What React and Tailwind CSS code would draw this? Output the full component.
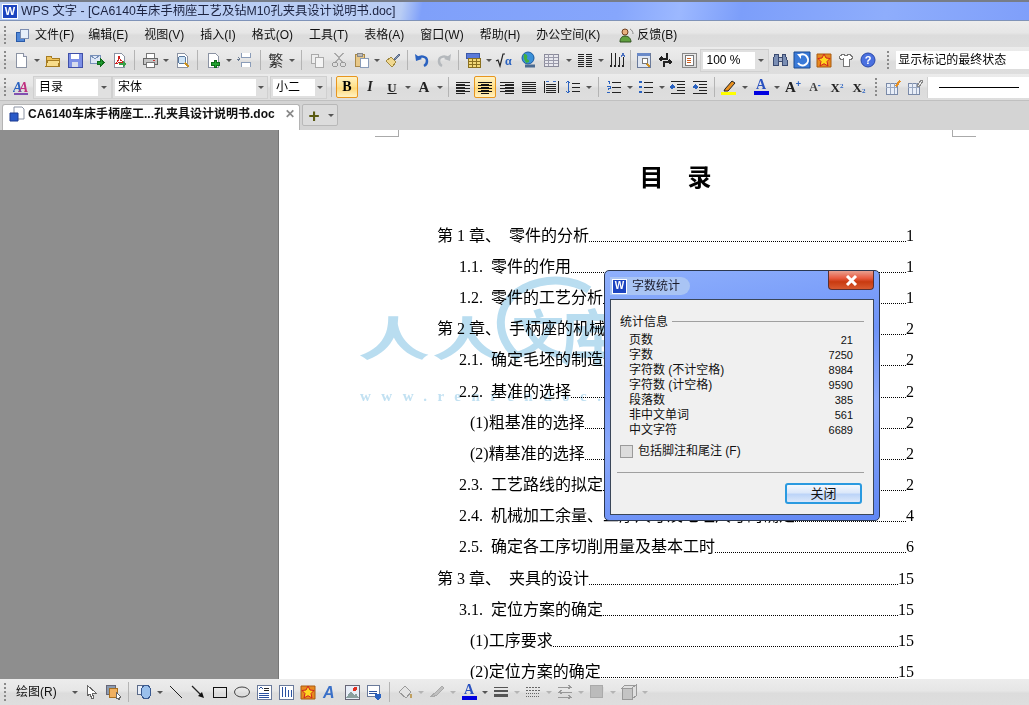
import { Fragment } from 'react'

const ui = 'font-["Liberation_Sans","Noto_Sans_CJK_SC",sans-serif]'
const doc = 'font-["Liberation_Serif","Noto_Sans_CJK_SC",serif]'

function S({ children, vb = '0 0 16 16', size = 16 }) {
  return <svg width={size} height={size} viewBox={vb} className="block" shapeRendering="crispEdges">{children}</svg>
}

function Page({ fill = '#fff' }) {
  return <path d="M3 1h7l3 3v11H3z" fill={fill} stroke="#8b93a3" />
}

const lines = (ys, x1, x2, c = '#222') => ys.map((y) => <path key={y} d={`M${x1} ${y}H${x2}`} stroke={c} />)

const icons = {
  app: <S><path d="M2 5h8v9H2z" fill="#4f87d8" stroke="#2a5aa8" /><path d="M6 2h8v9H6z" fill="#e6eefa" stroke="#7c8db0" /></S>,
  newdoc: <S><Page /><path d="M10 1v3h3" fill="#dde" stroke="#8b93a3" /></S>,
  open: <S><path d="M1 4h5l1 2h7v8H1z" fill="#eec35c" stroke="#a67c22" /><path d="M3 8h12l-2 6H1z" fill="#f8dc8a" stroke="#a67c22" /></S>,
  save: <S><path d="M1 1h14v14H1z" fill="#7c8fe6" stroke="#4050a8" /><path d="M4 2h8v5H4z" fill="#fff" /><path d="M5 10h6v5H5z" fill="#d8dcec" /></S>,
  mail: <S><path d="M1 3h10v8H1z" fill="#dfe8f6" stroke="#7890b8" /><path d="M1 3l5 4 5-4" fill="none" stroke="#7890b8" /><path d="M8 9h3V6l4 4.5-4 4.5v-3H8z" fill="#1e9a2e" stroke="#0f6a1a" /></S>,
  pdf: <S><Page /><path d="M4 12c3-2 4-5 4-8 0 3 2 5 5 6-3 0-6 1-9 2z" fill="none" stroke="#d02020" /><path d="M8 11h4V9l3 3-3 3v-2H8z" fill="#38a048" /></S>,
  print: <S><path d="M4 1h8v5H4z" fill="#fff" stroke="#777" /><path d="M1 6h14v6H1z" fill="#c4c4c4" stroke="#666" /><path d="M4 10h8v5H4z" fill="#fff" stroke="#777" /><path d="M11 8h2v1h-2z" fill="#d03030" /></S>,
  preview: <S><Page /><circle cx="8" cy="8" r="4" fill="#cfe4f6" stroke="#5a7aa0" /><path d="M11 11l4 4" stroke="#c89020" strokeWidth="2" /></S>,
  addpage: <S><Page /><path d="M9 8h2v2h3v3h-3v2H9v-2H6v-3h3z" fill="#20a030" stroke="#0c6a18" /></S>,
  pagebreak: <S><path d="M4 1v4h9V1M4 15v-5h9v5" fill="#fff" stroke="#8a9cb8" /><path d="M0 7h3M1 5l2 2-2 2" fill="none" stroke="#6a7a90" /></S>,
  fan: <span className={`text-[15px] leading-none text-[#333] ${ui}`}>繁</span>,
  copy: <S><path d="M2 2h7v9H2z" fill="#eee" stroke="#aaa" /><path d="M6 5h8v10H6z" fill="#f4f4f4" stroke="#aaa" /></S>,
  cut: <S><path d="M4 1l7 9M12 1l-7 9" stroke="#aaa" strokeWidth="1.5" /><circle cx="4" cy="12.5" r="2.5" fill="none" stroke="#999" /><circle cx="12" cy="12.5" r="2.5" fill="none" stroke="#999" /></S>,
  paste: <S><path d="M2 2h9v12H2z" fill="#e8c888" stroke="#a88848" /><path d="M4 1h5v3H4z" fill="#bbb" stroke="#888" /><path d="M7 6h8v9H7z" fill="#fff" stroke="#8a9cb8" /></S>,
  brush: <S><path d="M1 9l5-4 5 5-4 5z" fill="#f0d890" stroke="#a08840" /><path d="M9 7l5-5 1 1-5 5z" fill="#8a9cb8" stroke="#5a6a88" /></S>,
  undo: <svg width="16" height="16" viewBox="0 0 16 16" className="block"><path d="M3 7c3-4 10-3 10 2 0 2-1 4-3 5" fill="none" stroke="#2a62c0" strokeWidth="2.5" /><path d="M1 2l1 7 6-2z" fill="#2a62c0" /></svg>,
  redo: <svg width="16" height="16" viewBox="0 0 16 16" className="block"><path d="M13 7C10 3 3 4 3 9c0 2 1 4 3 5" fill="none" stroke="#b4b8bc" strokeWidth="2.5" /><path d="M15 2l-1 7-6-2z" fill="#b4b8bc" /></svg>,
  tablecal: <S><path d="M1 1h13v5H1z" fill="#5a7ad8" stroke="#3a58a8" /><path d="M3 6h12v9H3z" fill="#f2d878" stroke="#8a7020" /><path d="M7 6v9M11 6v9M3 9h12M3 12h12" stroke="#8a7020" /></S>,
  sqrt: <svg width="20" height="16" viewBox="0 0 20 16" className="block"><path d="M1 9l2-1 2 6 3-12h2" fill="none" stroke="#222" strokeWidth="1.2" /><text x="10" y="13" fontSize="12" fontWeight="700" fontFamily="Liberation Serif" fill="#2a62c0">α</text></svg>,
  globe: <svg width="18" height="18" viewBox="0 0 18 18" className="block"><circle cx="8" cy="7" r="6" fill="#3a90d8" stroke="#1a5aa0" /><path d="M4 3c3 0 4 2 3 4s3 1 2 4l-3 1C5 9 3 8 4 3z" fill="#40b040" /><path d="M5 15h10" stroke="#4a6a90" strokeWidth="3" /></svg>,
  table: <S><path d="M1 2h14v12H1z" fill="#e8e8ee" stroke="#8a8a9a" /><path d="M1 5h14M1 8.500h14M1 11.500h14M5.500 2v12M10.500 2v12" stroke="#9a9aaa" /></S>,
  cols: <S>{lines([2, 4, 6, 8, 10, 12, 14], 1, 7)}{lines([2, 4, 6, 8, 10, 12, 14], 9, 15)}</S>,
  bars: <S><path d="M2 1v13M6 1v13M10 5v9M14 5v9" stroke="#222" /><path d="M1 14h2M5 14h2M9 14h2M13 14h2" stroke="#222" strokeWidth="2" /><path d="M12 5l2-4 2 4M12.500 3h3" fill="none" stroke="#4a70c0" /></S>,
  review: <S><path d="M1 1h13v14H1z" fill="#dfe6f2" stroke="#6a7a9a" /><path d="M1 1h13v3H1z" fill="#6a8ac8" /><circle cx="9" cy="9" r="3" fill="#fff" stroke="#777" /><path d="M11 12l3 3" stroke="#d09020" strokeWidth="2" /></S>,
  arrows: <S><path d="M10 1v6H5M5 5L3 7l2 2M7 15v-5h5M12 8l2 2-2 2" fill="none" stroke="#222" strokeWidth="1.5" /></S>,
  frame: <S><path d="M1 1h14v14H1z" fill="none" stroke="#888" /><path d="M4 3h8v10H4z" fill="#fff" stroke="#777" /><path d="M6 6h4M6 8h4M6 10h4" stroke="#d06020" /></S>,
  binoc: <S><path d="M1 8l2-6h3v11H1zM15 8l-2-6h-3v11h5z" fill="#7a8eb4" stroke="#3a4a70" /><path d="M6 5h4v4H6z" fill="#aab6d0" stroke="#3a4a70" /></S>,
  blue: <svg width="18" height="18" viewBox="0 0 18 18" className="block"><path d="M1 1h16v16H1z" fill="#3a7ad8" stroke="#1a4a90" /><path d="M7 4a5.500 5.500 0 1 1-2 8" fill="none" stroke="#fff" strokeWidth="2" /><path d="M4 3h4v5z" fill="#fff" /></svg>,
  star: <svg width="16" height="16" viewBox="0 0 16 16" className="block"><path d="M1 2h14v13H1z" fill="#e88a20" stroke="#a85a10" /><path d="M8 2l2 4 4 .5-3 3 1 4.500-4-2.300-4 2.300 1-4.500-3-3 4-.5z" fill="#ffd820" stroke="#d02020" /></svg>,
  shirt: <S><path d="M5 2L1 5l2 3 2-1v7h6V7l2 1 2-3-4-3-3 2z" fill="#fff" stroke="#777" /></S>,
  help: <svg width="16" height="16" viewBox="0 0 16 16" className="block"><circle cx="8" cy="8" r="7" fill="#4a70e0" stroke="#2a48a8" /><text x="8" y="12" textAnchor="middle" fontSize="11" fontWeight="700" fontFamily="Liberation Sans" fill="#fff">?</text></svg>,
  style: <svg width="16" height="16" viewBox="0 0 16 16" className="block"><text x="0" y="13" fontSize="14" fontWeight="700" fontStyle="italic" fontFamily="Liberation Serif" fill="#2a62c0">A</text><text x="6" y="13" fontSize="14" fontWeight="700" fontStyle="italic" fontFamily="Liberation Serif" fill="#c03080">A</text><path d="M1 15h14" stroke="#6020a0" strokeWidth="1.500" /></svg>,
  b: <span className={`text-[14px] font-bold leading-none text-black ${doc}`}>B</span>,
  i: <span className={`text-[14px] italic font-bold leading-none text-[#222] ${doc}`}>I</span>,
  u: <span className={`text-[13px] font-bold underline leading-none text-[#222] ${doc}`}>U</span>,
  aa: <span className={`text-[15px] font-bold leading-none text-[#222] ${doc}`}>A</span>,
  left: <S>{lines([3, 6, 9, 12], 1, 15)}{lines([5, 8, 11, 14], 1, 10)}</S>,
  center: <S>{lines([3, 6, 9, 12], 1, 15, '#111')}{lines([5, 8, 11, 14], 4, 12, '#111')}</S>,
  right: <S>{lines([3, 6, 9, 12], 1, 15)}{lines([5, 8, 11, 14], 6, 15)}</S>,
  just: <S>{lines([3, 5, 7, 9, 11, 13], 1, 15)}</S>,
  dist: <S><path d="M1 2v12M15 2v12" stroke="#222" />{lines([5, 7, 9, 11, 13], 3, 13)}<path d="M3 2h3M10 2h3" stroke="#3a70c8" /></S>,
  spacing: <S><path d="M3 2v12M1 4l2-2 2 2M1 12l2 2 2-2" fill="none" stroke="#2a62c0" />{lines([4, 8, 12], 7, 15)}</S>,
  numlist: <S>{lines([3, 8, 13], 6, 15)}<path d="M2 2h1v3M1 7h3v2H2v2M1 13h3" fill="none" stroke="#2a62c0" /></S>,
  bullets: <S>{lines([3, 8, 13], 6, 15)}<path d="M1 2h3v2H1zM1 7h3v2H1zM1 12h3v2H1z" fill="#2a62c0" /></S>,
  outdent: <S>{lines([2, 14], 1, 15)}{lines([5, 8, 11], 7, 15)}<path d="M5 8H1M3 6L1 8l2 2" fill="none" stroke="#2a62c0" strokeWidth="1.500" /></S>,
  indent: <S>{lines([2, 14], 1, 15)}{lines([5, 8, 11], 7, 15)}<path d="M1 8h4M3 6l2 2-2 2" fill="none" stroke="#2a62c0" strokeWidth="1.500" /></S>,
  hl: <svg width="16" height="16" viewBox="0 0 16 16" className="block"><path d="M4 10l7-8 3 2-7 8H3z" fill="#e89020" stroke="#222" /><path d="M0 13h15v3H0z" fill="#ffff00" /></svg>,
  color: <div className="flex flex-col items-center w-[15px]"><span className={`text-[14px] font-bold leading-[12px] text-[#2a52c0] ${doc}`}>A</span><div className="w-[15px] h-[4px] bg-[#0000e0]" /></div>,
  aplus: <span className={`relative text-[15px] font-bold leading-none text-[#222] ${doc}`}>A<span className={`text-[9px] text-[#2a62c0] align-top ${ui}`}>+</span></span>,
  aminus: <span className={`text-[12px] font-bold leading-none text-[#444] ${doc}`}>A<span className={`text-[9px] text-[#2a62c0] align-top ${ui}`}>-</span></span>,
  sup: <span className={`text-[13px] font-bold leading-none text-[#222] ${doc}`}>X<sup className="text-[7px] text-[#2a62c0]">2</sup></span>,
  sub: <span className={`text-[13px] font-bold leading-none text-[#222] ${doc}`}>X<sub className="text-[7px] text-[#2a62c0]">2</sub></span>,
  tpen: <S><path d="M1 4h11v11H1z" fill="#e8eef8" stroke="#7a8aa8" /><path d="M1 8h11M5 4v11M9 4v11" stroke="#9aa8c0" /><path d="M10 7l4-6 2 1-4 6z" fill="#e89020" /></S>,
  terase: <S><path d="M1 4h11v11H1z" fill="#e8eef8" stroke="#7a8aa8" /><path d="M1 8h11M5 4v11M9 4v11" stroke="#9aa8c0" /><path d="M10 7l4-6 2 1-4 6z" fill="#eee" stroke="#888" /></S>,
  cursor: <S><path d="M4 1v11l3-2 2 5 2-1-2-5h4z" fill="#fff" stroke="#666" /></S>,
  objs: <S><path d="M1 1h9v9H1z" fill="#8a9ab0" stroke="#667" /><path d="M4 4h8v9H4z" fill="#f0b060" stroke="#a87020" /><path d="M11 8v7l2-1 1 2 1-1-1-2h2z" fill="#fff" stroke="#666" /></S>,
  shapes: <S><path d="M1 1h10v9H1z" fill="#e8eef8" stroke="#5a6a88" /><ellipse cx="10" cy="8" rx="5" ry="7" fill="#9ac0ec" stroke="#3a5a90" /></S>,
  line: <S><path d="M2 2l12 12" stroke="#222" shapeRendering="auto" /></S>,
  arrow: <svg width="16" height="16" viewBox="0 0 16 16" className="block"><path d="M2 2l9 9" stroke="#222" strokeWidth="1.200" /><path d="M14 14l-6-2 4-4z" fill="#111" /></svg>,
  rect: <S><path d="M1.500 3.500h13v10h-13z" fill="none" stroke="#111" /></S>,
  ellipse: <svg width="16" height="16" viewBox="0 0 16 16" className="block"><ellipse cx="8" cy="8" rx="7.500" ry="5" fill="none" stroke="#444" /></svg>,
  textbox: <S><path d="M1 1h14v14H1z" fill="#fff" stroke="#6a7a9a" /><path d="M3 5l2-2 2 2" fill="none" stroke="#2a52a0" />{lines([4, 6], 8, 13)}{lines([9, 11, 13], 3, 13, '#2a52a0')}</S>,
  vtextbox: <S><path d="M1 1h14v14H1z" fill="#fff" stroke="#6a7a9a" /><path d="M4 3v10M7 3v10M10 6v7M13 6v7" stroke="#2a52a0" /></S>,
  wordart: <svg width="16" height="18" viewBox="0 0 16 18" className="block"><text x="1" y="15" fontSize="16" fontWeight="700" fontStyle="italic" fontFamily="Liberation Sans" fill="#3a70c8">A</text></svg>,
  image: <S><path d="M1 1h14v14H1z" fill="#e8eef8" stroke="#667" /><path d="M2 14l5-7 3 4 2-2 3 5z" fill="#8aa0a0" /><circle cx="11" cy="5" r="2" fill="#e03020" /></S>,
  diagram: <S><path d="M1 1h12v11H1z" fill="#fff" stroke="#6a7a9a" />{lines([7, 9], 3, 11, '#2a52a0')}<path d="M9 10h6v4l-3 2-3-2z" fill="#2a62c0" /></S>,
  fill: <S><path d="M2 8l6-6 6 6-5 6z" fill="#e4e4e4" stroke="#999" /><path d="M14 10v4" stroke="#c0a060" strokeWidth="2" /></S>,
  pen: <S><path d="M1 13c2-1 3-3 5-4l7-7 2 2-7 7c-2 1-4 2-7 2z" fill="#c0c0c0" stroke="#aaa" /></S>,
  weight: <S><path d="M1 3h14" stroke="#555" /><path d="M1 6.500h14" stroke="#555" strokeWidth="2" /><path d="M1 11h14" stroke="#555" strokeWidth="3" /></S>,
  dash: <S><path d="M1 3h14M1 6h14" stroke="#666" strokeDasharray="2 1" /><path d="M1 9h14M1 12h14" stroke="#666" strokeDasharray="1 1" /></S>,
  arrowstyle: <S><path d="M1 3h14M11 1l3 2-3 2M1 8h14M5 6L2 8l3 2M1 13h14M11 11l3 2-3 2" fill="none" stroke="#999" /></S>,
  shadow: <S><path d="M3 3h12v12H3z" fill="#ddd" /><path d="M1 1h12v12H1z" fill="#bbb" stroke="#aaa" /></S>,
  cube: <S><path d="M1 4h10v11H1z" fill="#c4c4c4" stroke="#999" /><path d="M1 4l3-3h11l-4 3zM11 4l4-3v11l-4 3z" fill="#e0e0e0" stroke="#999" /></S>,
}

const Grip = () => (
  <div className="w-[2px] h-[18px] mx-[3px] border-l-2 border-dotted border-[#8a8a8a]" />
)
const Sep = ({ m = 'mx-[4px]' }) => <div className={`w-px h-[20px] ${m} bg-[#b4b4b4]`} />
const Drop = ({ w = 'w-[10px]', dim }) => (
  <div className={`${w} flex justify-center`}>
    <div className={`w-0 h-0 border-x-[3px] border-x-transparent border-t-[3px] ${dim ? 'border-t-[#b4b4b4]' : 'border-t-[#555]'}`} />
  </div>
)
const Btn = ({ name, on, w = 'w-[22px]' }) => (
  <div
    className={`${w} h-[22px] flex items-center justify-center rounded-[2px] ${
      on ? 'border border-[#e8961e] bg-[linear-gradient(#fff2c4,#ffe08a_50%,#ffd878_55%,#fff2c4)]' : ''
    }`}
  >
    {icons[name]}
  </div>
)

// 'name' = button, 'v' = dropdown arrow, '|' = separator, 'n'/'m' = tighter separators, '_' = 2px gap
function Items({ list }) {
  return list.map((it, i) => {
    if (it === 'v') return <Drop key={i} />
    if (it === 'd') return <Drop key={i} dim />
    if (it === '|') return <Sep key={i} />
    if (it === 'n') return <Sep key={i} m="mx-[3px]" />
    if (it === 'm') return <Sep key={i} m="mx-[2px]" />
    if (it === '_') return <div key={i} className="w-[2px]" />
    return <Btn key={i} name={it} />
  })
}

function Combo({ value, w, inner, indent = 'pl-[3px]' }) {
  return (
    <div className={`${w} h-[23px] flex items-center border border-[#d0d0d0] bg-[#e0e0e0] p-[2px]`}>
      <div className={`${inner} h-[17px] bg-white ${indent} text-[12px] leading-[17px] text-black whitespace-nowrap overflow-hidden`}>{value}</div>
      <Drop w="flex-1" />
    </div>
  )
}

const barBg = 'bg-[linear-gradient(#ececec,#e6e6e6_45%,#dcdcdc_55%,#dedede)]'

function TitleBar() {
  return (
    <div className="h-[21px] flex items-center bg-[linear-gradient(100deg,#b9cdf4_0,#b9cdf4_39%,#7fa0fa_41%,#86a6fc_60%,#9cb8ff_66%,#7c9efa_72%,#8eadfc_86%,#7f9ffa_100%)] border-t-2 border-[#777d88] border-b border-b-[#7f93b8]">
      <div className="w-[16px] h-[15px] ml-[2px] mr-[3px] flex items-center justify-center bg-[#1c44c0] border border-[#fff] text-[11px] font-bold leading-none text-white">W</div>
      <span className="text-[12.300px] text-[#1c2340] whitespace-pre">WPS 文字 - [CA6140车床手柄座工艺及钻M10孔夹具设计说明书.doc]</span>
    </div>
  )
}

const menus = ['文件(F)', '编辑(E)', '视图(V)', '插入(I)', '格式(O)', '工具(T)', '表格(A)', '窗口(W)', '帮助(H)', '办公空间(K)']

function MenuBar() {
  return (
    <div className={`h-[26px] pt-[2px] flex items-center ${barBg}`}>
      <div className="w-[9px] flex justify-center"><Grip /></div>
      <div className="w-[26px] flex justify-center">{icons.app}</div>
      {menus.map((m, i) => (
        <span key={m} className={`${i === 0 ? 'mr-[14px]' : 'mr-[16px]'} text-[12px] text-[#111] whitespace-nowrap`}>{m}</span>
      ))}
      <div className="ml-[3px] mr-[2px] w-[16px] h-[16px] flex items-center justify-center">
        <svg width="16" height="16" viewBox="0 0 16 16"><circle cx="6" cy="5" r="3" fill="#e8b080" stroke="#704020" /><path d="M1 15c0-4 2-6 5-6s6 2 6 6z" fill="#60a040" stroke="#305020" /><path d="M11 2c2 1 3 3 3 5" fill="none" stroke="#888" /></svg>
      </div>
      <span className="text-[12px] text-[#111]">反馈(B)</span>
    </div>
  )
}

function Toolbar1() {
  return (
    <div className={`h-[27px] pb-[1px] flex items-center ${barBg}`}>
      <div className="w-[10px] flex justify-center"><Grip /></div>
      <Items list={['newdoc', 'v', 'open', 'save', 'mail', 'pdf', '|', 'print', 'v', 'preview', '|', 'addpage', 'v', 'pagebreak', '|', 'fan', 'v', '|', 'copy', 'cut', 'paste', 'v', 'brush', 'n', 'undo', 'redo', 'n', 'tablecal', 'v', 'sqrt', '_', 'globe', 'table', '_', 'v', 'cols', 'v', 'bars', 'm', 'review', 'arrows', '_', 'frame']} />
      <Combo value="100 %" w="w-[69px]" inner="w-[52px]" />
      <Items list={['binoc', 'blue', 'star', 'shirt', 'help']} />
      <div className="w-[17px] flex justify-center"><Grip /></div>
      <div className="w-[133px] h-[18px] bg-white pl-[2px] text-[12px] leading-[18px] text-black">显示标记的最终状态</div>
    </div>
  )
}

function Toolbar2() {
  return (
    <div className={`h-[26px] flex items-center ${barBg}`}>
      <div className="w-[10px] flex justify-center"><Grip /></div>
      <Btn name="style" />
      <div className="ml-[1px]"><Combo value="目录" w="w-[79px]" inner="w-[62px]" /></div>
      <Combo value="宋体" w="w-[156px]" inner="w-[141px]" />
      <div className="ml-[2px]"><Combo value="小二" w="w-[57px]" inner="w-[42px]" /></div>
      <Sep />
      <Btn name="b" on />
      <div className="w-[1px]" />
      <Items list={['i', 'u', 'v', 'aa', 'v', 'n', 'left']} />
      <Btn name="center" on />
      <Items list={['right', 'just', 'dist', 'spacing', 'v', '|', 'numlist', 'v', 'bullets', 'v', 'outdent', 'indent', 'n', 'hl', 'v', 'color', 'v', 'aplus', 'aminus', 'sup', 'sub']} />
      <div className="w-[12px] flex justify-center"><Grip /></div>
      <Btn name="tpen" />
      <Btn name="terase" />
      <div className="ml-[1px] flex-1 h-[21px] bg-white flex items-center pl-[11px] border-l border-[#d0d0d0]">
        <div className="w-[80px] h-px bg-black" />
      </div>
    </div>
  )
}

function TabBar() {
  return (
    <div className="h-[30px] flex items-end bg-[#d4d4d4] border-t border-[#c0c0c0] pl-[2px]">
      <div className="w-[298px] h-[26px] flex items-center bg-white border border-b-0 border-[#b4b4b4] rounded-t-[3px] pl-[6px] pb-[8px]">
        <svg width="16" height="16" viewBox="0 0 16 16" className="mr-[3px] shrink-0"><path d="M5 1h8l2 2v10H5z" fill="#fff" stroke="#8b93a3" /><path d="M1 7h8v8H1z" fill="#2a5ac8" stroke="#1c3a90" /></svg>
        <span className="text-[12px] font-bold text-[#111] whitespace-nowrap">CA6140车床手柄座工...孔夹具设计说明书.doc</span>
        <span className="ml-auto mr-[4px] text-[12px] font-bold leading-none text-[#888]">✕</span>
      </div>
      <div className="ml-[2px] mb-[4px] w-[36px] h-[22px] flex items-center border border-[#b8b8b8] rounded-[2px] bg-[#dcdcdc]">
        <span className="w-[22px] text-center text-[19px] font-bold leading-none text-[#5a5a10]">+</span>
        <Drop w="flex-1" />
      </div>
    </div>
  )
}

const toc = [
  ['第 1 章、  零件的分析', '1', 0],
  ['1.1.  零件的作用', '1', 1],
  ['1.2.  零件的工艺分析', '1', 1],
  ['第 2 章、  手柄座的机械加工工艺规程设计', '2', 0],
  ['2.1.  确定毛坯的制造形式', '2', 1],
  ['2.2.  基准的选择', '2', 1],
  ['(1)粗基准的选择', '2', 2],
  ['(2)精基准的选择', '2', 2],
  ['2.3.  工艺路线的拟定', '2', 1],
  ['2.4.  机械加工余量、工序尺寸及毛坯尺寸的确定', '4', 1],
  ['2.5.  确定各工序切削用量及基本工时', '6', 1],
  ['第 3 章、  夹具的设计', '15', 0],
  ['3.1.  定位方案的确定', '15', 1],
  ['(1)工序要求', '15', 2],
  ['(2)定位方案的确定', '15', 2],
]
const indents = ['', 'pl-[22px]', 'pl-[33px]']

function Document() {
  return (
    <div className={`relative flex-1 min-h-0 flex overflow-hidden ${doc}`}>
      <div className="w-[279px] bg-[#8e8e8e] border-r border-[#777]" />
      <div className="flex-1 bg-white relative">
        {/* page corner marks */}
        <div className="flex justify-between pl-[96px] pr-[53px]">
          <div className="w-[24px] h-[7px] border-r border-b border-[#aaa]" />
          <div className="w-[24px] h-[7px] border-l border-b border-[#aaa]" />
        </div>
        <div className="pl-[158px] w-[635px]">
          <div className="h-[63px] pt-[21px] text-center text-[24px] font-bold leading-[40px] text-black whitespace-pre">目    录</div>
          <div className="pt-[20px]">
            {toc.map(([label, page, lvl]) => (
              <div key={label} className={`h-[31.2px] flex items-center text-[16px] text-black ${indents[lvl]}`}>
                <span className="whitespace-pre">{label}</span>
                <span className="flex-1 h-[12px] border-b border-dotted border-black" />
                <span>{page}</span>
              </div>
            ))}
          </div>
        </div>
      </div>
      <Watermark />
    </div>
  )
}

function Watermark() {
  return (
    <div className="absolute left-[358px] top-[166px] w-[290px] h-[125px] pointer-events-none mix-blend-multiply">
      <div className="flex items-center h-[88px] text-[72px] leading-none font-bold text-[#b9ddf0]">
        <span className="scale-y-[0.65] mr-[2px]">人</span>
        <span className="scale-y-[0.65]">人</span>
        <span className="text-[52px] ml-[8px] mt-[-6px]">文</span>
        <span className="text-[60px] ml-[-4px]">库</span>
      </div>
      <svg width="120" height="100" viewBox="0 0 120 100" className="absolute left-[136px] top-[-28px]">
        <path d="M25 90C0 70 0 35 30 20c25-12 50-8 65 2" fill="none" stroke="#b9ddf0" strokeWidth="8" />
      </svg>
      <div className="pl-[2px] text-[15px] font-bold leading-[24px] text-[#c2e1f2] tracking-[10.500px] whitespace-nowrap">www.renrendoc.com</div>
    </div>
  )
}

const stats = [
  ['页数', '21'],
  ['字数', '7250'],
  ['字符数 (不计空格)', '8984'],
  ['字符数 (计空格)', '9590'],
  ['段落数', '385'],
  ['非中文单词', '561'],
  ['中文字符', '6689'],
]

function WordCount() {
  return (
    <div className="absolute left-[604px] top-[270px] w-[276px] h-[251px] flex flex-col rounded-[5px] border border-[#2c3850] bg-[linear-gradient(170deg,#8fb0fc,#6f94f8_35%,#8aa9fb_60%,#5f86f4)] px-[5px] pb-[5px]">
      <div className="h-[28px] flex items-start shrink-0">
        <div className="mt-[6px] flex items-center h-[18px] w-[80px] rounded-r-full bg-[#a9c4f4]">
          <div className="w-[15px] h-[15px] ml-[2px] mr-[5px] flex items-center justify-center bg-[#1c44c0] border border-white text-[10px] font-bold leading-none text-white">W</div>
          <span className="text-[12px] text-[#1a1a2a] whitespace-nowrap">字数统计</span>
        </div>
        <div className="ml-auto w-[46px] h-[19px] flex items-center justify-center rounded-b-[4px] border border-t-0 border-[#5a3030] bg-[linear-gradient(#e8a090,#e85a40_40%,#c83a10_60%,#d85a30)]">
          <svg width="13" height="11" viewBox="0 0 13 11"><path d="M2 1l9 9M11 1l-9 9" stroke="#fff" strokeWidth="3" /></svg>
        </div>
      </div>
      <div className="flex-1 border border-[#3a4658] bg-[#f0f0f0] pl-[6px] pr-[9px] pt-[14px] text-[12px] text-[#111]">
        <div className="flex items-center ml-[3px] h-[15px]">
          <span className="mr-[4px]">统计信息</span>
          <div className="flex-1 h-px bg-[#a0a0a0]" />
        </div>
        <div className="mt-[4px]">
          {stats.map(([k, v]) => (
            <div key={k} className="h-[15px] flex justify-between items-center pl-[12px] pr-[11px] leading-[15px]">
              <span>{k}</span>
              <span className="text-[11px]">{v}</span>
            </div>
          ))}
        </div>
        <div className="mt-[6px] ml-[3px] flex items-center h-[14px]">
          <div className="w-[13px] h-[13px] mr-[5px] border border-[#9a9a9a] bg-[#dcdcdc]" />
          <span>包括脚注和尾注 (F)</span>
        </div>
        <div className="mt-[14px] h-px bg-[#a0a0a0]" />
        <div className="mt-[10px] flex justify-end pr-[2px]">
          <div className="w-[77px] h-[21px] flex items-center justify-center rounded-[3px] border-2 border-[#2a9ae0] bg-[linear-gradient(#f4f8fe,#dce8fa_45%,#bcd4f8_55%,#dce8fa)] text-[13px]">关闭</div>
        </div>
      </div>
    </div>
  )
}

function DrawBar() {
  return (
    <div className={`h-[26px] shrink-0 flex items-center ${barBg}`}>
      <div className="w-[10px] flex justify-center"><Grip /></div>
      <span className="ml-[6px] w-[54px] text-[12px] text-[#111] whitespace-nowrap">绘图(R)</span>
      <Drop />
      <Items list={['cursor', 'objs', '|', 'shapes', 'v', 'line', 'arrow', 'rect', 'ellipse', 'textbox', 'vtextbox', 'star', 'wordart', 'image', 'diagram', '|', 'fill', 'd', 'pen', 'd', 'color', 'v', 'weight', 'd', 'dash', 'd', 'arrowstyle', 'd', 'shadow', 'd', 'cube', 'd']} />
    </div>
  )
}

export default function App() {
  return (
    <div className={`relative w-[1029px] h-[705px] flex flex-col overflow-hidden bg-[#e4e4e4] ${ui}`}>
      <TitleBar />
      <MenuBar />
      <Toolbar1 />
      <Toolbar2 />
      <TabBar />
      <Document />
      <DrawBar />
      <WordCount />
    </div>
  )
}
